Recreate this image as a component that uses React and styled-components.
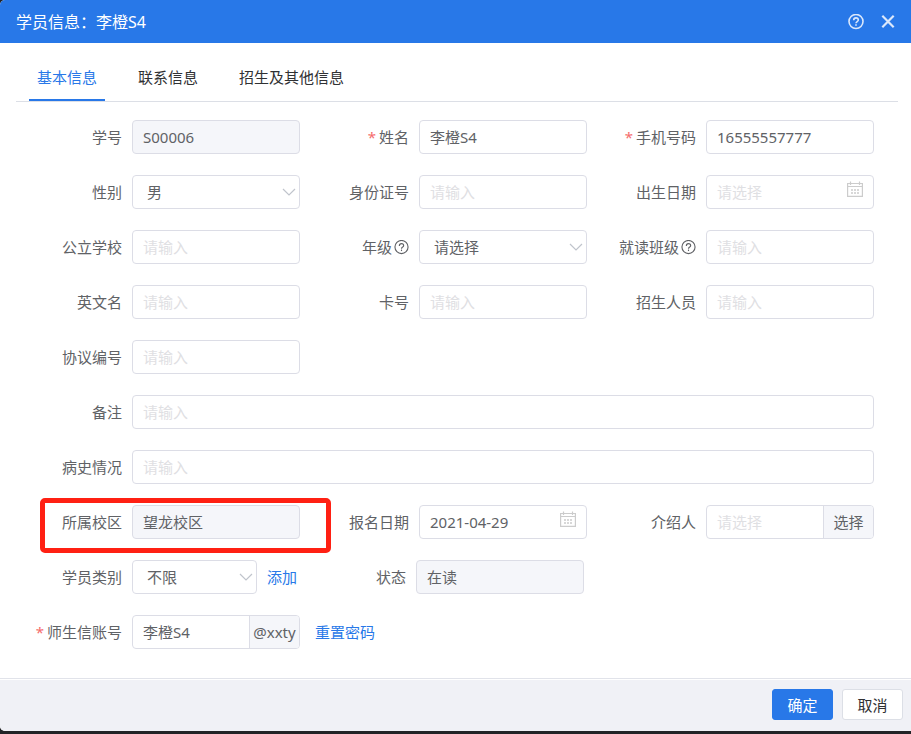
import React, { useState } from "react";
import styled, { createGlobalStyle } from "styled-components";

const GlobalStyle = createGlobalStyle`
    * {
        box-sizing: border-box;
    }

    body {
        margin: 0;
        background-color: #222326;
        font-family: "Noto Sans", "Noto Sans CJK SC", sans-serif;
        font-size: 15px;
        line-height: 20px;
        color: #606266;
    }

    button, input, select {
        font: inherit;
        color: inherit;
    }
`

const Dialog = styled.div`
    display: flex;
    flex-direction: column;
    min-height: calc(100vh - 3px);
    background-color: white;
    border-radius: 5px 0 0 5px;
    overflow: hidden;
`

const Header = styled.header`
    display: flex;
    align-items: center;
    justify-content: space-between;
    height: 43px;
    padding: 0 15px 0 16px;
    background-color: #2878e8;
    color: white;
`

const Title = styled.h1`
    margin: 0;
    font-size: 16px;
    font-weight: 400;
`

const HeaderActions = styled.div`
    display: flex;
    align-items: center;
    gap: 16px;
`

const IconButton = styled.button`
    display: flex;
    padding: 0;
    border: none;
    background: none;
    color: #dbe8fb;
    cursor: pointer;
`

const Tabs = styled.div`
    display: flex;
    gap: 25px;
    margin: 0 13px 0 16px;
    padding-left: 13px;
    border-bottom: 1px solid #dcdfe6;
`

const Tab = styled.button`
    height: 58px;
    padding: 12px 8px 0;
    border: none;
    border-bottom: 2px solid ${props => props.$active ? "#2878e8" : "transparent"};
    background: none;
    color: ${props => props.$active ? "#2878e8" : "#303133"};
    cursor: pointer;
`

const Form = styled.form`
    flex: 1;
    display: flex;
    flex-direction: column;
    gap: 21px;
    padding: 18px 37px 29px 13px;
`

const Row = styled.div`
    display: flex;
`

const Cell = styled.div`
    position: relative;
    display: flex;
    align-items: center;
    gap: 10px;
    flex: none;
    width: ${props => props.$width || "calc(100% / 3)"};
`

const Label = styled.label`
    display: flex;
    align-items: center;
    justify-content: flex-end;
    flex: none;
    gap: 2px;
    width: 109px;
    white-space: nowrap;
`

const Star = styled.span`
    margin-right: 1px;
    color: #f56c6c;
`

const Control = styled.div`
    position: relative;
    display: flex;
    flex: ${props => props.$width ? "none" : "1"};
    width: ${props => props.$width || "auto"};
    min-width: 0;
    height: 34px;
    border: 1px solid #dcdde6;
    border-radius: 4px;
    background-color: ${props => props.$disabled ? "#f5f6fa" : "white"};
    overflow: hidden;
`

const Input = styled.input`
    flex: 1;
    width: 100%;
    min-width: 0;
    padding: 0 10px;
    border: none;
    outline: none;
    background: none;

    &::placeholder {
        color: #dfe0e3;
        opacity: 1;
    }
`

const Select = styled.select`
    width: 100%;
    padding: 0 24px 0 14px;
    border: none;
    outline: none;
    background: none;
    appearance: none;
`

const ArrowSvg = styled.svg`
    position: absolute;
    top: 11px;
    right: 3px;
    pointer-events: none;
`

const CalendarSvg = styled.svg`
    position: absolute;
    top: 5px;
    right: 10px;
    pointer-events: none;
`

const Addon = styled.span`
    display: flex;
    align-items: center;
    justify-content: center;
    flex: none;
    width: 50px;
    border-left: 1px solid #dcdde6;
    background-color: #f5f6fa;
`

const AddonButton = styled.button`
    flex: none;
    width: 50px;
    padding: 0;
    border: none;
    border-left: 1px solid #dcdde6;
    background-color: #f5f6fa;
    cursor: pointer;
`

const Link = styled.a`
    align-self: center;
    color: #2878e8;
    text-decoration: none;
    white-space: nowrap;
`

const ResetLink = styled(Link)`
    margin-left: 15px;
`

const Highlight = styled.div`
    position: absolute;
    top: -7px;
    right: -31px;
    bottom: -14px;
    left: 27px;
    border: 5px solid #ff2013;
    border-radius: 5px;
    pointer-events: none;
`

const Footer = styled.footer`
    padding-top: 1px;
    border-top: 1px solid #e1e3ea;
`

const FooterBar = styled.div`
    display: flex;
    justify-content: flex-end;
    gap: 9px;
    padding: 9px 8px 11px;
    background-color: #f0f1f6;
`

const Button = styled.button`
    width: 61px;
    height: 31px;
    padding: 0;
    border: 1px solid ${props => props.$primary ? "#2878e8" : "#dcdfe6"};
    border-radius: 3px;
    background-color: ${props => props.$primary ? "#2878e8" : "white"};
    color: ${props => props.$primary ? "white" : "#303133"};
    cursor: pointer;
`

function HelpIcon({ size, weight }) {
    return (
        <svg width={size} height={size} viewBox="0 0 16 16" fill="none" stroke="currentColor" strokeWidth={weight}>
            <circle cx="8" cy="7.5" r="7" />
            <path d="M5.7 6.300C5.700 4.700 6.600 3.900 8 3.900s2.300.800 2.300 2.100c0 1.500-2.300 1.600-2.300 3.300" />
            <path d="M8 10.200v1.600" />
        </svg>
    )
}

function CloseIcon() {
    return (
        <svg width="16" height="16" viewBox="0 0 16 16" fill="none" stroke="currentColor" strokeWidth="2.2">
            <path d="M2.300 1.800l11.400 11.400M13.700 1.800L2.300 13.200" />
        </svg>
    )
}

function Arrow() {
    return (
        <ArrowSvg width="14" height="10" viewBox="0 0 14 10" fill="none" stroke="#c0c4cc" strokeWidth="1.2">
            <path d="M1 2l6 6 6-6" />
        </ArrowSvg>
    )
}

function Calendar() {
    return (
        <CalendarSvg width="16" height="16" viewBox="0 0 16 16" fill="none" stroke="#cccccc" strokeWidth="1.2">
            <path d="M.6 2.500h14.800v12.900H.6zM.6 5.500h14.800" />
            <path d="M3.500 .5v3.500M12.500 .5v3.500" />
            <path d="M4 9h2M7 9h2M10 9h2M4 12h2M7 12h2M10 12h2" strokeWidth="1.5" />
        </CalendarSvg>
    )
}

function Field(props) {
    const { id, label, required, help, width, children } = props;

    return (
        <Cell $width={width}>
            <Label htmlFor={id}>
                {required && <Star>*</Star>}
                {label}
                {help && <HelpIcon size={15} weight={1.2} />}
            </Label>
            {children}
        </Cell>
    )
}

function TextField(props) {
    const { id, value, placeholder, disabled, calendar, addon, ...rest } = props;

    return (
        <Field id={id} {...rest}>
            <Control $disabled={disabled}>
                <Input id={id} type="text" defaultValue={value} placeholder={placeholder || "请输入"} disabled={disabled} />
                {calendar && <Calendar />}
                {addon}
            </Control>
        </Field>
    )
}

function SelectField(props) {
    const { id, options, controlWidth, after, ...rest } = props;

    return (
        <Field id={id} {...rest}>
            <Control $width={controlWidth}>
                <Select id={id}>
                    {options.map(option => <option key={option}>{option}</option>)}
                </Select>
                <Arrow />
            </Control>
            {after}
        </Field>
    )
}

const tabs = ["基本信息", "联系信息", "招生及其他信息"];

function App() {
    const [activeTab, setActiveTab] = useState(0);

    return (
        <Dialog role="dialog" aria-labelledby="title">
            <GlobalStyle />
            <Header>
                <Title id="title">学员信息：李橙S4</Title>
                <HeaderActions>
                    <IconButton aria-label="帮助"><HelpIcon size={16} weight={1.6} /></IconButton>
                    <IconButton aria-label="关闭"><CloseIcon /></IconButton>
                </HeaderActions>
            </Header>

            <Tabs role="tablist">
                {tabs.map((tab, i) => (
                    <Tab key={tab} role="tab" aria-selected={i === activeTab} $active={i === activeTab} onClick={() => setActiveTab(i)}>
                        {tab}
                    </Tab>
                ))}
            </Tabs>

            <Form>
                <Row>
                    <TextField id="number" label="学号" value="S00006" disabled />
                    <TextField id="name" label="姓名" value="李橙S4" required />
                    <TextField id="phone" label="手机号码" value="16555557777" required />
                </Row>
                <Row>
                    <SelectField id="gender" label="性别" options={["男", "女"]} />
                    <TextField id="idCard" label="身份证号" />
                    <TextField id="birthday" label="出生日期" placeholder="请选择" calendar />
                </Row>
                <Row>
                    <TextField id="school" label="公立学校" />
                    <SelectField id="grade" label="年级" options={["请选择"]} help />
                    <TextField id="class" label="就读班级" help />
                </Row>
                <Row>
                    <TextField id="englishName" label="英文名" />
                    <TextField id="card" label="卡号" />
                    <TextField id="recruiter" label="招生人员" />
                </Row>
                <Row>
                    <TextField id="agreement" label="协议编号" />
                </Row>
                <Row>
                    <TextField id="remark" label="备注" width="100%" />
                </Row>
                <Row>
                    <TextField id="medical" label="病史情况" width="100%" />
                </Row>
                <Row>
                    <Field id="campus" label="所属校区">
                        <Control $disabled>
                            <Input id="campus" type="text" defaultValue="望龙校区" disabled />
                        </Control>
                        <Highlight />
                    </Field>
                    <TextField id="signDate" label="报名日期" value="2021-04-29" calendar />
                    <TextField
                        id="referrer"
                        label="介绍人"
                        placeholder="请选择"
                        addon={<AddonButton type="button">选择</AddonButton>}
                    />
                </Row>
                <Row>
                    <SelectField
                        id="category"
                        label="学员类别"
                        options={["不限"]}
                        width="auto"
                        controlWidth="125px"
                        after={<Link href="#add">添加</Link>}
                    />
                    <TextField id="status" label="状态" value="在读" disabled />
                </Row>
                <Row>
                    <TextField id="account" label="师生信账号" value="李橙S4" required addon={<Addon>@xxty</Addon>} />
                    <ResetLink href="#reset">重置密码</ResetLink>
                </Row>
            </Form>

            <Footer>
                <FooterBar>
                    <Button type="button" $primary>确定</Button>
                    <Button type="button">取消</Button>
                </FooterBar>
            </Footer>
        </Dialog>
    )
}

export default App;
